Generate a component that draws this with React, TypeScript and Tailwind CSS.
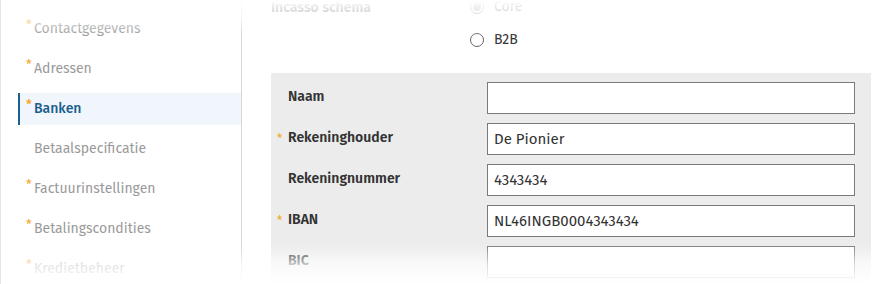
import React from "react";

const font = { fontFamily: '"Fira Sans", "Noto Sans", "Open Sans", sans-serif' };

const menu = [
  { label: "Contactgegevens", req: true },
  { label: "Adressen", req: true },
  { label: "Banken", req: true, active: true },
  { label: "Betaalspecificatie", req: false },
  { label: "Factuurinstellingen", req: true },
  { label: "Betalingscondities", req: true },
  { label: "Kredietbeheer", req: true },
];

const fields = [
  { label: "Naam", value: "", req: false },
  { label: "Rekeninghouder", value: "De Pionier", req: true },
  { label: "Rekeningnummer", value: "4343434", req: false },
  { label: "IBAN", value: "NL46INGB0004343434", req: true },
  { label: "BIC", value: "", req: false },
];

function Sidebar() {
  return (
    <aside className="flex w-[241px] shrink-0 flex-col gap-2 border-r border-[#d6d6d6] pt-[13px]">
      {menu.map((item) => (
        <div
          key={item.label}
          className={
            item.active
              ? "ml-[17px] flex h-8 items-center border-l-2 border-[#1b5f8f] bg-[#f0f6fb] pl-[6px] text-[14px] font-medium text-[#1b5f8f]"
              : "ml-[17px] flex h-8 items-center border-l-2 border-transparent pl-[6px] text-[14px] text-[#9a9a9a]"
          }
        >
          <span className="mb-[8px] w-[8px] text-[13px] leading-none text-[#f5a623]">{item.req ? "*" : ""}</span>
          <span>{item.label}</span>
        </div>
      ))}
    </aside>
  );
}

function Radio({ label, checked }: { label: string; checked?: boolean }) {
  return (
    <div className="flex h-[33px] items-center gap-[10px]">
      <span className="flex h-[14px] w-[14px] items-center justify-center rounded-full border border-[#666] bg-white">
        {checked && <span className="h-[8px] w-[8px] rounded-full bg-[#888]" />}
      </span>
      <span className="text-[14px] text-[#333]">{label}</span>
    </div>
  );
}

function BankForm() {
  return (
    <div className="mt-[17px] flex flex-col gap-[9px] bg-[#ececec] pb-6 pl-[6px] pr-4 pt-[9px]">
      {fields.map((f) => (
        <div key={f.label} className="flex h-8 items-center">
          <span className="w-[11px] text-[12px] leading-none text-[#f5a623]">{f.req ? "*" : ""}</span>
          <span className="-mt-[3px] w-[199px] text-[14px] font-semibold text-[#333]">{f.label}</span>
          <div className="flex h-8 flex-1 items-center border border-[#7a7a7a] bg-white px-[6px] text-[15px] text-[#333]">
            {f.value}
          </div>
        </div>
      ))}
    </div>
  );
}

export default function App() {
  return (
    <div className="relative flex h-[284px] w-[889px] overflow-hidden border-l border-[#e4e4e4] bg-white" style={font}>
      <Sidebar />
      <main className="w-[629px] pl-[29px]">
        <div className="-mt-[10px] flex">
          <span className="w-[199px] pt-[7px] text-[14px] font-semibold text-[#333]">Incasso schema</span>
          <div className="flex flex-col">
            <Radio label="Core" checked />
            <Radio label="B2B" />
          </div>
        </div>
        <BankForm />
      </main>
      <div className="pointer-events-none absolute inset-x-0 top-0 h-[36px] bg-gradient-to-b from-white via-white/70 to-white/0" />
      <div className="pointer-events-none absolute inset-x-0 bottom-0 h-[40px] bg-gradient-to-t from-white via-white/70 to-white/0" />
    </div>
  );
}
